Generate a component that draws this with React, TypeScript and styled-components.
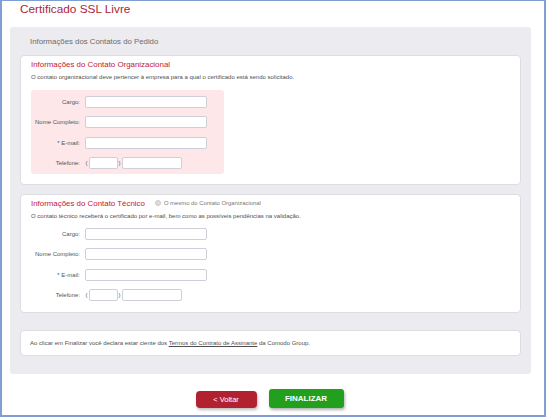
import React from 'react';
import styled, { createGlobalStyle } from 'styled-components';

const GlobalStyle = createGlobalStyle`
  html, body {
    margin: 0;
    padding: 0;
    background: #ffffff;
  }
  body {
    font-family: "Liberation Sans", Arial, sans-serif;
  }
  * {
    box-sizing: border-box;
  }
`;

interface FieldRowProps {
  label: string;
  phone?: boolean;
}

function FieldRow({ label, phone }: FieldRowProps) {
  return (
    <Row>
      <FieldLabel>{label}</FieldLabel>
      {phone ? (
        <PhoneWrapper>
          <Paren>(</Paren>
          <TextInput $width={29} />
          <Paren>)</Paren>
          <TextInput $width={60} />
        </PhoneWrapper>
      ) : (
        <TextInput $width={122} />
      )}
    </Row>
  );
}

function ContactFields() {
  return (
    <>
      <FieldRow label="Cargo:" />
      <FieldRow label="Nome Completo:" />
      <FieldRow label="* E-mail:" />
      <FieldRow label="Telefone:" phone />
    </>
  );
}

export default function App() {
  return (
    <>
      <GlobalStyle />
      <Frame>
        <PageTitle>Certificado SSL Livre</PageTitle>
        <Panel>
          <PanelHeader>Informações dos Contatos do Pedido</PanelHeader>
          <Card $height={130}>
            <CardTitleRow>
              <CardTitle>Informações do Contato Organizacional</CardTitle>
            </CardTitleRow>
            <Description>
              O contato organizacional deve pertencer à empresa para a qual o certificado está sendo solicitado.
            </Description>
            <FieldsBox $highlight>
              <ContactFields />
            </FieldsBox>
          </Card>
          <Card $height={119} $gap={9}>
            <CardTitleRow>
              <CardTitle>Informações do Contato Técnico</CardTitle>
              <RadioOption>
                <RadioDot />
                O mesmo do Contato Organizacional
              </RadioOption>
            </CardTitleRow>
            <Description>
              O contato técnico receberá o certificado por e-mail, bem como as possíveis pendências na validação.
            </Description>
            <FieldsBox>
              <ContactFields />
            </FieldsBox>
          </Card>
          <TermsCard>
            Ao clicar em Finalizar você declara estar ciente dos <TermsLink>Termos do Contrato de Assinante</TermsLink> da Comodo Group.
          </TermsCard>
        </Panel>
        <ButtonBar>
          <BackButton>&lt; Voltar</BackButton>
          <FinishButton>FINALIZAR</FinishButton>
        </ButtonBar>
      </Frame>
    </>
  );
}

const Frame = styled.div`
  width: 546px;
  height: 417px;
  border: 2px solid #7f9fd2;
  border-top-width: 1px;
  overflow: hidden;
`;

const PageTitle = styled.h1`
  margin: 0;
  height: 26px;
  padding: 1px 0 0 18px;
  font-size: 11.8px;
  font-weight: normal;
  line-height: 14px;
  color: #ad2339;
`;

const Panel = styled.div`
  width: 521px;
  margin-left: 8px;
  padding: 0 10px 18px;
  background: #ebebf0;
  border-radius: 3px;
`;

const PanelHeader = styled.div`
  height: 28px;
  padding: 10px 0 0 10px;
  font-size: 7.8px;
  line-height: 10px;
  color: #6b6b6b;
`;

const Card = styled.div<{ $height: number; $gap?: number }>`
  height: ${({ $height }) => $height}px;
  margin-top: ${({ $gap }) => $gap ?? 0}px;
  padding: 2px 10px 0;
  background: #ffffff;
  border: 1px solid #dcdce2;
  border-radius: 4px;
`;

const CardTitleRow = styled.div`
  display: flex;
  align-items: center;
  height: 12px;
`;

const CardTitle = styled.span`
  font-size: 7.9px;
  color: #c3192f;
  margin-right: 10px;
`;

const RadioOption = styled.label`
  display: flex;
  align-items: center;
  gap: 3px;
  font-size: 5.9px;
  color: #777777;
`;

const RadioDot = styled.span`
  display: inline-block;
  width: 6px;
  height: 6px;
  border-radius: 50%;
  background: #dddddd;
  border: 1px solid #c8c8c8;
`;

const Description = styled.p`
  margin: 3px 0 0;
  font-size: 6px;
  line-height: 9px;
  color: #505050;
  white-space: nowrap;
`;

const FieldsBox = styled.div<{ $highlight?: boolean }>`
  display: flex;
  flex-direction: column;
  gap: 8.3px;
  width: 193px;
  margin-top: ${({ $highlight }) => ($highlight ? '8px' : '7px')};
  padding: ${({ $highlight }) => ($highlight ? '6px 0 5px' : '0')};
  background: ${({ $highlight }) => ($highlight ? '#fde7e8' : 'transparent')};
  border-radius: 3px;
`;

const Row = styled.div`
  display: flex;
  align-items: center;
  height: 12px;
`;

const FieldLabel = styled.span`
  width: 49px;
  margin-right: 5px;
  text-align: right;
  font-size: 6px;
  color: #555555;
  white-space: nowrap;
`;

const TextInput = styled.input.attrs({ type: 'text' })<{ $width: number }>`
  width: ${({ $width }) => $width}px;
  height: 12px;
  padding: 0 3px;
  background: #ffffff;
  border: 1px solid #cfcfdc;
  border-radius: 2px;
  outline: none;
`;

const PhoneWrapper = styled.div`
  display: flex;
  align-items: center;
`;

const Paren = styled.span`
  width: 3px;
  margin-right: 1px;
  font-size: 6px;
  color: #555555;
  text-align: center;
`;

const TermsCard = styled.div`
  height: 26px;
  margin-top: 17px;
  padding: 8px 0 0 9px;
  background: #ffffff;
  border: 1px solid #dcdce2;
  border-radius: 4px;
  font-size: 6px;
  line-height: 8px;
  color: #505050;
  white-space: nowrap;
`;

const TermsLink = styled.a`
  color: #505050;
  text-decoration: underline;
`;

const ButtonBar = styled.div`
  display: flex;
  justify-content: center;
  align-items: center;
  gap: 12px;
  margin-top: 17px;
  padding-right: 7px;
`;

const BackButton = styled.button`
  width: 61px;
  height: 17px;
  padding: 0;
  border: none;
  border-radius: 4px;
  background: #b2212f;
  box-shadow: 1px 2px 3px rgba(0, 0, 0, 0.25);
  font-family: "Liberation Sans", Arial, sans-serif;
  font-size: 7.5px;
  color: #ffffff;
  cursor: pointer;
`;

const FinishButton = styled.button`
  width: 75px;
  height: 19px;
  margin-top: -2px;
  padding: 0;
  border: none;
  border-radius: 3px;
  background: #229f1c;
  box-shadow: 1px 2px 3px rgba(0, 0, 0, 0.3);
  font-family: "Liberation Sans", Arial, sans-serif;
  font-size: 8px;
  font-weight: bold;
  color: #ffffff;
  cursor: pointer;
`;
